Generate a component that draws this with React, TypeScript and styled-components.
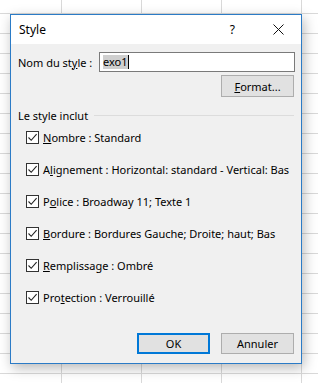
import styled, { createGlobalStyle } from "styled-components";

const GlobalStyle = createGlobalStyle`
  html, body {
    margin: 0;
    padding: 0;
  }
  body {
    font-family: "Noto Sans", "Liberation Sans", sans-serif;
    font-size: 11px;
    color: #000;
  }
`;

const items = [
  { key: "N", before: "", after: "ombre : Standard" },
  { key: "l", before: "A", after: "ignement : Horizontal: standard - Vertical: Bas" },
  { key: "o", before: "P", after: "lice : Broadway 11; Texte 1" },
  { key: "B", before: "", after: "ordure : Bordures Gauche; Droite; haut; Bas" },
  { key: "R", before: "", after: "emplissage : Ombré" },
  { key: "t", before: "Pro", after: "ection : Verrouillé" },
];

export default function App() {
  return (
    <Sheet>
      <GlobalStyle />
      <Dialog>
        <TitleBar>
          <Title>Style</Title>
          <Help>?</Help>
          <Close>
            <svg width="11" height="11" viewBox="0 0 11 11">
              <path d="M0.5 0.5 L10.5 10.5 M10.5 0.5 L0.5 10.5" stroke="#111" strokeWidth="1" />
            </svg>
          </Close>
        </TitleBar>
        <Body>
          <NameRow>
            <Label>
              Nom du st<u>y</u>le :
            </Label>
            <Input>
              <Selected>exo1</Selected>
              <Caret />
            </Input>
          </NameRow>
          <FormatRow>
            <Button>
              <u>F</u>ormat...
            </Button>
          </FormatRow>
          <Group>
            <GroupLabel>Le style inclut</GroupLabel>
            <GroupLine />
          </Group>
          <List>
            {items.map((it) => (
              <Row key={it.after}>
                <Check>
                  <svg width="11" height="11" viewBox="0 0 11 11">
                    <path d="M1.5 5.5 L4.2 8.3 L9.6 2.2" fill="none" stroke="#222" strokeWidth="1.1" />
                  </svg>
                </Check>
                <span>
                  {it.before}
                  <u>{it.key}</u>
                  {it.after}
                </span>
              </Row>
            ))}
          </List>
          <Footer>
            <Button $primary>OK</Button>
            <Button>Annuler</Button>
          </Footer>
        </Body>
      </Dialog>
    </Sheet>
  );
}

const Sheet = styled.div`
  width: 318px;
  height: 383px;
  overflow: hidden;
  background-color: #fff;
  background-image:
    linear-gradient(to right, #d9d9d9 1px, transparent 1px),
    linear-gradient(to bottom, #d9d9d9 1px, transparent 1px);
  background-size: 80px 20px;
  background-position: 61px 13px;
  padding: 14px 0 0 10px;
  box-sizing: border-box;
`;

const Dialog = styled.div`
  width: 292px;
  height: 350px;
  box-sizing: border-box;
  border: 1px solid #2b7bc6;
  background: #f0f0f0;
  box-shadow: 2px 4px 12px rgba(0, 0, 0, 0.28);
  display: flex;
  flex-direction: column;
`;

const TitleBar = styled.div`
  height: 29px;
  background: #fff;
  display: flex;
  align-items: center;
  padding-left: 8px;
`;

const Title = styled.span`
  font-size: 12px;
  flex: 1;
`;

const Help = styled.span`
  font-size: 12px;
  margin-right: 38px;
`;

const Close = styled.span`
  display: flex;
  margin-right: 17px;
`;

const Body = styled.div`
  flex: 1;
  display: flex;
  flex-direction: column;
  padding: 8px 6px 9px 7px;
`;

const NameRow = styled.div`
  display: flex;
  align-items: center;
  height: 20px;
`;

const Label = styled.span`
  width: 81px;
  white-space: nowrap;
`;

const Input = styled.div`
  flex: 1;
  height: 20px;
  box-sizing: border-box;
  border: 1px solid #7a7a7a;
  background: #fff;
  display: flex;
  align-items: center;
  padding-left: 3px;
`;

const Selected = styled.span`
  background: #cfcfcf;
  line-height: 14px;
`;

const Caret = styled.span`
  width: 1px;
  height: 14px;
  background: #000;
`;

const FormatRow = styled.div`
  display: flex;
  justify-content: flex-end;
  margin-top: 3px;
  padding-right: 1px;
`;

const Button = styled.button<{ $primary?: boolean }>`
  width: 73px;
  height: 22px;
  box-sizing: border-box;
  font: inherit;
  color: #000;
  padding: 0;
  background: #e1e1e1;
  border: ${(p) => (p.$primary ? "2px solid #0078d7" : "1px solid #adadad")};
`;

const Group = styled.div`
  display: flex;
  align-items: center;
  margin-top: 11px;
  height: 14px;
`;

const GroupLabel = styled.span`
  margin-right: 6px;
`;

const GroupLine = styled.div`
  flex: 1;
  height: 1px;
  background: #dcdcdc;
  margin-right: 1px;
`;

const List = styled.div`
  display: flex;
  flex-direction: column;
  padding-left: 8px;
  margin-top: -1px;
`;

const Row = styled.div`
  display: flex;
  align-items: center;
  height: 32px;
  gap: 4px;
  white-space: nowrap;
`;

const Check = styled.span`
  width: 13px;
  height: 13px;
  flex: none;
  box-sizing: border-box;
  border: 1px solid #333;
  background: #fff;
  display: flex;
  align-items: center;
  justify-content: center;
`;

const Footer = styled.div`
  margin-top: auto;
  display: flex;
  justify-content: flex-end;
  gap: 11px;
  padding-right: 1px;

  & > button {
    height: 21px;
  }
`;
